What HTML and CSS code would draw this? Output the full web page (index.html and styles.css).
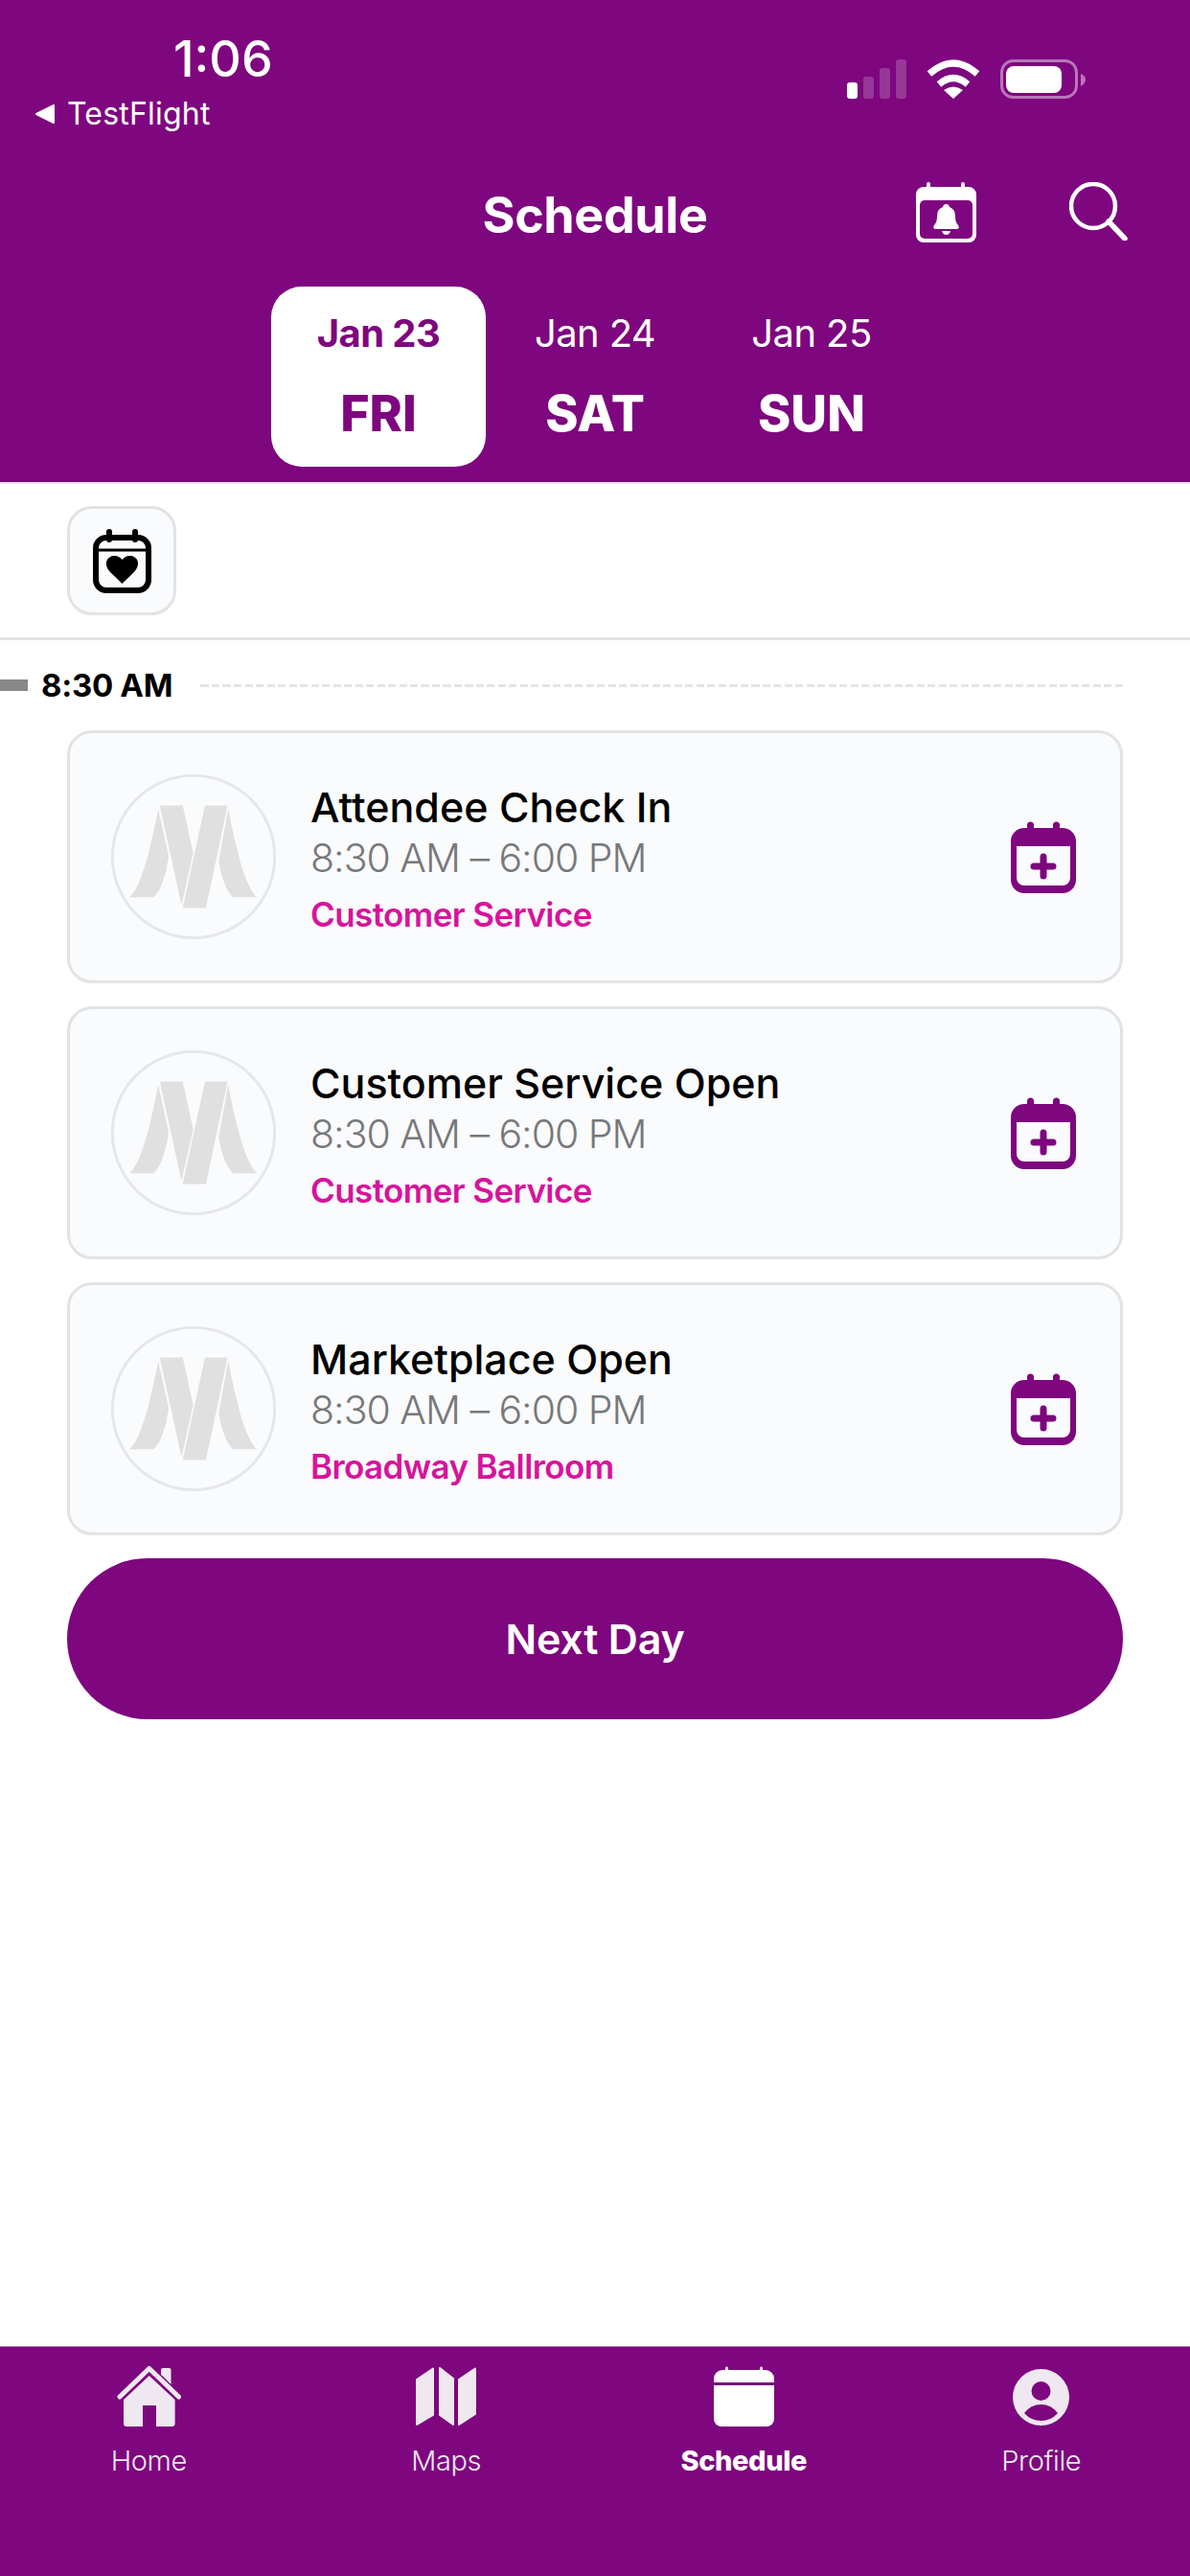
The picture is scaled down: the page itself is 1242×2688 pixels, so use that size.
FILE: index.html
```html
<!DOCTYPE html>
<html lang="en">
<head>
  <meta charset="UTF-8" />
  <meta name="viewport" content="width=device-width, initial-scale=1.0"/>
  <title>Schedule</title>
  <link rel="stylesheet" href="styles.css">
</head>
<body>
  <svg class="defs" width="0" height="0">
    <symbol id="logo" viewBox="47 52 518 518">
      <circle cx="306" cy="311" r="255" fill="none" stroke="#e6e7e9" stroke-width="9"/>
      <path fill="#e0e0e0" d="M195 160 L228 310 Q212 410 180 438 L105 438 Q150 400 195 160Z"/>
      <path fill="#e0e0e0" d="M200 150 H272 L305 300 L268 462Z"/>
      <path fill="#e0e0e0" d="M342 150 H413 L345 472 H272Z"/>
      <path fill="#e0e0e0" d="M415 160 Q460 400 505 438 L430 438 Q400 410 385 325Z"/>
    </symbol>
    <symbol id="cal-plus" viewBox="0 0 68 75">
      <path fill="#7e067e" d="M17 7 V4 a3.5 3.5 0 0 1 7 0 V7 H44 V4 a3.5 3.5 0 0 1 7 0 V7 h3 a14 14 0 0 1 14 14 V61 a14 14 0 0 1 -14 14 H14 a14 14 0 0 1 -14 -14 V21 a14 14 0 0 1 14 -14Z"/>
      <path fill="#fafbfd" d="M6 26 H62 V59 a8 8 0 0 1 -8 8 H14 a8 8 0 0 1 -8 -8Z"/>
      <path stroke="#7e067e" stroke-width="7" stroke-linecap="round" d="M34 37 V57 M24 47 H44"/>
    </symbol>
  </svg>

  <header class="header">
    <div class="status-bar">
      <div class="status-left">
        <div class="status-time">1:06</div>
        <div class="status-back">
          <svg class="back-arrow" width="20" height="20" viewBox="0 0 20 20"><path fill="#fff" stroke="#fff" stroke-width="2" stroke-linejoin="round" d="M1 10 L19 1 V19Z"/></svg>
          TestFlight
        </div>
      </div>
      <div class="status-right">
        <div class="signal">
          <span class="bar bar-on bar-1"></span>
          <span class="bar bar-2"></span>
          <span class="bar bar-3"></span>
          <span class="bar bar-4"></span>
        </div>
        <svg width="56" height="41" viewBox="0 0 56 41">
          <path fill="none" stroke="#fff" stroke-width="7" d="M3 15 Q28 -7 53 15"/>
          <path fill="none" stroke="#fff" stroke-width="7" d="M13 26 Q28 13 43 26"/>
          <path fill="#fff" d="M28 41 L18 32 Q28 25 38 32Z"/>
        </svg>
        <svg width="89" height="41" viewBox="0 0 89 41">
          <rect x="1.5" y="1.5" width="78" height="38" rx="12" fill="none" stroke="#fff" stroke-opacity="0.45" stroke-width="3"/>
          <rect x="6" y="7" width="58" height="28" rx="8" fill="#fff"/>
          <path fill="#fff" fill-opacity="0.45" d="M84 15 Q89 17 89 21 Q89 25 84 28Z"/>
        </svg>
      </div>
    </div>

    <div class="title-row">
      <div></div>
      <h1 class="title">Schedule</h1>
      <div class="title-actions">
        <svg width="63" height="63" viewBox="0 0 63 63">
          <path fill="#fff" d="M11 5 V2 a2 2 0 0 1 4 0 V5 H47 V2 a2 2 0 0 1 4 0 V5 h4 a8 8 0 0 1 8 8 V55 a8 8 0 0 1 -8 8 H8 a8 8 0 0 1 -8 -8 V13 a8 8 0 0 1 8 -8Z"/>
          <rect x="4" y="19" width="55" height="40" rx="5" fill="#7e067e"/>
          <path fill="#fff" d="M31.5 23 q3 0 3.5 3 q6 2 6 10 q0 6 3 9 q2 3 -1 4 H20 q-3 -1 -1 -4 q3 -3 3 -9 q0 -8 6 -10 q.5 -3 3.5 -3Z"/>
          <path fill="#fff" d="M27 51 H36 q-1 4 -4.5 4 T27 51Z"/>
        </svg>
        <svg width="61" height="61" viewBox="0 0 61 61">
          <circle cx="25" cy="25" r="23" fill="none" stroke="#fff" stroke-width="4.5"/>
          <path stroke="#fff" stroke-width="5.5" stroke-linecap="round" d="M41 41 L58 59"/>
        </svg>
      </div>
    </div>

    <nav class="days">
      <div class="day day-active"><span class="day-date">Jan 23</span><span class="day-name">FRI</span></div>
      <div class="day"><span class="day-date">Jan 24</span><span class="day-name">SAT</span></div>
      <div class="day"><span class="day-date">Jan 25</span><span class="day-name">SUN</span></div>
    </nav>
  </header>

  <main class="content">
    <div class="filter-row">
      <div class="filter-btn">
        <svg width="61" height="67" viewBox="0 0 61 67">
          <rect x="3" y="9" width="55" height="55" rx="11" fill="none" stroke="#000" stroke-width="6"/>
          <path stroke="#000" stroke-width="6" stroke-linecap="round" d="M17 3 V11 M44 3 V11"/>
          <path stroke="#000" stroke-width="3" d="M3 22 H58"/>
          <path fill="#000" d="M30.5 57 L18 45 C10 36 15 28 22.5 28 C26 28 29 30 30.5 32 C32 30 35 28 38.5 28 C46 28 51 36 43 45Z"/>
        </svg>
      </div>
    </div>

    <div class="time-row">
      <span class="time-mark"></span>
      <span class="time-label">8:30 AM</span>
      <span class="time-dash"></span>
    </div>

    <div class="cards">
      <div class="card">
        <svg class="avatar"><use href="#logo"/></svg>
        <div class="card-text">
          <div class="card-title">Attendee Check In</div>
          <div class="card-time">8:30 AM – 6:00 PM</div>
          <div class="card-place">Customer Service</div>
        </div>
        <svg class="card-add"><use href="#cal-plus"/></svg>
      </div>
      <div class="card">
        <svg class="avatar"><use href="#logo"/></svg>
        <div class="card-text">
          <div class="card-title">Customer Service Open</div>
          <div class="card-time">8:30 AM – 6:00 PM</div>
          <div class="card-place">Customer Service</div>
        </div>
        <svg class="card-add"><use href="#cal-plus"/></svg>
      </div>
      <div class="card">
        <svg class="avatar"><use href="#logo"/></svg>
        <div class="card-text">
          <div class="card-title">Marketplace Open</div>
          <div class="card-time">8:30 AM – 6:00 PM</div>
          <div class="card-place">Broadway Ballroom</div>
        </div>
        <svg class="card-add"><use href="#cal-plus"/></svg>
      </div>
      <button class="next-btn">Next Day</button>
    </div>
  </main>

  <footer class="tabbar">
    <div class="tab">
      <div class="tab-icon">
        <svg width="67" height="64" viewBox="0 0 67 64">
          <path fill="#f0e8f0" d="M46 4 a2 2 0 0 1 2 -2 H54.5 a2 2 0 0 1 2 2 V24 L46 13Z"/>
          <path fill="none" stroke="#7e067e" stroke-width="2" d="M46 10 L58 22"/>
          <path fill="none" stroke="#f0e8f0" stroke-width="5" stroke-linecap="round" stroke-linejoin="round" d="M3 32 L33.7 2.5 L64.5 32"/>
          <path fill="#f0e8f0" d="M33.7 10 L60.6 35 V60 a3 3 0 0 1 -3 3 H41 V41 H27 V63 H10 a3 3 0 0 1 -3 -3 V35Z"/>
        </svg>
      </div>
      <span class="tab-label">Home</span>
    </div>
    <div class="tab">
      <div class="tab-icon">
        <svg width="63" height="62" viewBox="0 0 63 62">
          <path fill="#f0e8f0" stroke="#f0e8f0" stroke-width="2" stroke-linejoin="round" d="M1 13 L18 1.5 V50 L1 60Z"/>
          <path fill="#f0e8f0" stroke="#f0e8f0" stroke-width="2" stroke-linejoin="round" d="M25 1 L39 12 V60 L25 50Z"/>
          <path fill="#f0e8f0" stroke="#f0e8f0" stroke-width="2" stroke-linejoin="round" d="M45 13 L62 1.5 V49 L45 60Z"/>
        </svg>
      </div>
      <span class="tab-label">Maps</span>
    </div>
    <div class="tab tab-active">
      <div class="tab-icon">
        <svg width="63" height="64" viewBox="0 0 63 64">
          <path fill="#fff" d="M12 4 V2 a1.5 1.5 0 0 1 3 0 V4 H48 V2 a1.5 1.5 0 0 1 3 0 V4 h3 a9 9 0 0 1 9 9 V17 H0 V13 a9 9 0 0 1 9 -9Z"/>
          <path fill="#fff" d="M0 20 H63 V55 a8 8 0 0 1 -8 8 H8 a8 8 0 0 1 -8 -8Z"/>
        </svg>
      </div>
      <span class="tab-label">Schedule</span>
    </div>
    <div class="tab">
      <div class="tab-icon">
        <svg width="59" height="59" viewBox="0 0 59 59">
          <circle cx="29.5" cy="29.5" r="29.5" fill="#f0e8f0"/>
          <circle cx="29.5" cy="23" r="10" fill="#7e067e"/>
          <path fill="#7e067e" d="M12 46 Q19 37 29.5 37 Q40 37 47 46 Q40 54 29.5 54 Q19 54 12 46Z"/>
        </svg>
      </div>
      <span class="tab-label">Profile</span>
    </div>
  </footer>
</body>
</html>
```

FILE: styles.css
```css
* {
  box-sizing: border-box;
  font-family: Inter, 'Noto Sans', sans-serif;
}

body {
  margin: 0;
  height: 2688px;
  display: flex;
  flex-direction: column;
  background: #ffffff;
  color: #000000;
  overflow: hidden;
}

.defs {
  display: none;
}

.header {
  height: 505px;
  background: #7e067e;
  color: #ffffff;
  border-bottom: 2px solid #e8e2e8;
}

.status-bar {
  height: 186px;
  display: flex;
  justify-content: space-between;
}

.status-left {
  padding: 36px 0 0 37px;
}

.status-time {
  font-size: 52px;
  font-weight: 500;
  line-height: 52px;
  margin-left: 144px;
}

.status-back {
  display: flex;
  align-items: center;
  gap: 13px;
  margin-top: 14px;
  font-size: 32px;
  line-height: 34px;
  letter-spacing: 0.2px;
}

.status-right {
  display: flex;
  align-items: flex-start;
  gap: 21px;
  padding: 62px 109px 0 0;
}

.signal {
  display: flex;
  align-items: flex-end;
  gap: 6px;
  height: 41px;
}

.bar {
  width: 11px;
  border-radius: 3px;
  background: rgba(255, 255, 255, 0.2);
}

.bar-on {
  background: #ffffff;
}

.bar-1 { height: 17px; }
.bar-2 { height: 23px; }
.bar-3 { height: 32px; }
.bar-4 { height: 41px; }

.title-row {
  height: 63px;
  display: grid;
  grid-template-columns: 1fr auto 1fr;
  align-items: center;
}

.title {
  align-self: start;
  margin: 7px 0 0;
  font-size: 52px;
  font-weight: 700;
  line-height: 63px;
  letter-spacing: -0.4px;
}

.title-actions {
  display: flex;
  justify-content: flex-end;
  gap: 97px;
  padding-right: 65px;
}

.days {
  display: flex;
  justify-content: center;
  gap: 2px;
  margin-top: 50px;
}

.day {
  width: 224px;
  height: 188px;
  border-radius: 32px;
  display: flex;
  flex-direction: column;
  align-items: center;
  padding-top: 27px;
}

.day-active {
  background: #ffffff;
  color: #7e067e;
}

.day-date {
  font-size: 40px;
  line-height: 44px;
  letter-spacing: -0.6px;
}

.day-active .day-date {
  font-weight: 700;
}

.day-name {
  font-size: 52px;
  font-weight: 800;
  line-height: 56px;
  margin-top: 34px;
}

.content {
  flex: 1;
}

.filter-row {
  padding: 23px 70px;
  border-bottom: 3px solid #e3e3e3;
}

.filter-btn {
  width: 114px;
  height: 114px;
  border: 3px solid #e2e3e5;
  border-radius: 26px;
  background: #fafbfd;
  display: flex;
  align-items: center;
  justify-content: center;
}

.time-row {
  display: flex;
  align-items: center;
  padding-top: 28px;
  padding-right: 70px;
}

.time-mark {
  width: 29px;
  height: 12px;
  background: #888888;
}

.time-label {
  margin-left: 14px;
  font-size: 33px;
  font-weight: 700;
  line-height: 38px;
  letter-spacing: -0.3px;
}

.time-dash {
  flex: 1;
  height: 3px;
  margin-left: 26px;
  background: repeating-linear-gradient(270deg, #e4e4e4 0 8px, transparent 8px 11.5px);
}

.cards {
  display: flex;
  flex-direction: column;
  gap: 24px;
  margin-top: 28px;
  padding: 0 70px;
}

.card {
  height: 264px;
  border: 3px solid #e2e3e5;
  border-radius: 26px;
  background: #fafbfd;
  display: flex;
  align-items: center;
  padding: 0 46px 0 43px;
}

.avatar {
  width: 172px;
  height: 172px;
  flex-shrink: 0;
}

.card-text {
  flex: 1;
  margin-left: 36px;
  padding-top: 6px;
}

.card-title {
  font-size: 43px;
  font-weight: 500;
  line-height: 44px;
  color: #000000;
}

.card-time {
  margin-top: 9px;
  font-size: 41px;
  font-weight: 300;
  line-height: 44px;
  letter-spacing: -1px;
  color: #77787a;
}

.card-place {
  margin-top: 17px;
  font-size: 35px;
  font-weight: 600;
  line-height: 40px;
  letter-spacing: -0.6px;
  color: #d6149b;
}

.card-add {
  width: 68px;
  height: 75px;
  flex-shrink: 0;
}

.next-btn {
  height: 168px;
  border: none;
  border-radius: 84px;
  background: #7e067e;
  color: #ffffff;
  font-size: 43px;
  font-weight: 600;
  letter-spacing: -0.2px;
}

.tabbar {
  height: 240px;
  display: flex;
  padding-top: 20px;
  background: #7e067e;
  color: #f0e8f0;
  border-top: 1px solid #a88ca8;
}

.tab {
  flex: 1;
  display: flex;
  flex-direction: column;
  align-items: center;
}

.tab-icon {
  height: 64px;
  display: flex;
  align-items: center;
}

.tab-label {
  margin-top: 17px;
  font-size: 29px;
  font-weight: 300;
  line-height: 36px;
  letter-spacing: -0.4px;
}

.tab-active {
  color: #ffffff;
}

.tab-active .tab-label {
  font-weight: 800;
}
```
